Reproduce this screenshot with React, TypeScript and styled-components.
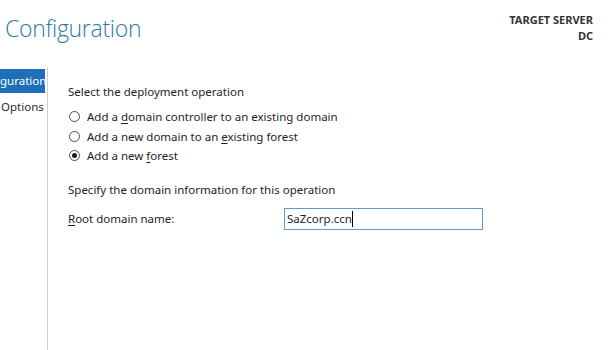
import React from 'react'
import styled, { createGlobalStyle } from 'styled-components'

const GlobalStyle = createGlobalStyle`
  html, body {
    margin: 0;
    padding: 0;
    background: #ffffff;
  }
  body {
    font-family: 'Segoe UI', 'Noto Sans', 'Open Sans', sans-serif;
    color: #1e1e1e;
  }
`

const Page = styled.div`
  width: 611px;
  height: 350px;
  display: flex;
  flex-direction: column;
  overflow: hidden;
  background: #fff;
`

const Header = styled.div`
  display: flex;
  justify-content: space-between;
  align-items: flex-start;
  height: 68px;
  flex-shrink: 0;
`

const Title = styled.h1`
  margin: 12px 0 0 5px;
  font-family: 'Open Sans', 'Lato', sans-serif;
  font-weight: 300;
  font-size: 23px;
  letter-spacing: -0.3px;
  line-height: 32px;
  color: #2a7bab;
`

const Target = styled.div`
  margin: 12px 18px 0 0;
  text-align: right;
  font-size: 11px;
  font-weight: 700;
  line-height: 16px;
  color: #333;
`

const Body = styled.div`
  flex: 1;
  display: flex;
`

const Nav = styled.div`
  width: 47px;
  padding-top: 1px;
  border-right: 1px solid #cfcfcf;
  display: flex;
  flex-direction: column;
  overflow: hidden;
`

const NavItem = styled.div<{ $active?: boolean }>`
  height: 24px;
  line-height: 24px;
  padding-left: ${p => (p.$active ? 0 : 1)}px;
  width: 45px;
  box-sizing: border-box;
  font-size: 11.5px;
  white-space: nowrap;
  background: ${p => (p.$active ? '#1e6fb9' : 'transparent')};
  color: ${p => (p.$active ? '#fff' : '#2b2b2b')};
  margin-bottom: 2px;
`

const Content = styled.div`
  flex: 1;
  padding: 14px 0 0 20px;
  font-size: 11.5px;
`

const Caption = styled.div`
  height: 20px;
  line-height: 20px;
  margin-bottom: 5px;
`

const Radios = styled.div`
  display: flex;
  flex-direction: column;
  margin-bottom: 14px;
`

const RadioRow = styled.label`
  display: flex;
  align-items: center;
  height: 19.5px;
  gap: 7px;
  padding-left: 1px;
`

const Dot = styled.span<{ $on?: boolean }>`
  width: 11px;
  height: 11px;
  border-radius: 50%;
  border: 1px solid #4d4d4d;
  box-sizing: border-box;
  display: flex;
  align-items: center;
  justify-content: center;
  background: #fff;
  &::after {
    content: '';
    width: 5px;
    height: 5px;
    border-radius: 50%;
    background: ${p => (p.$on ? '#1a1a1a' : 'transparent')};
  }
`

const Key = styled.span`
  text-decoration: underline;
  text-underline-offset: 2px;
`

const FieldRow = styled.div`
  display: flex;
  align-items: center;
  margin-top: 8px;
`

const FieldLabel = styled.div`
  width: 216px;
`

const Input = styled.div`
  width: 199px;
  height: 22px;
  box-sizing: border-box;
  border: 1px solid #5b9bd0;
  padding: 0 2px;
  display: flex;
  align-items: center;
  font-size: 11.5px;
`

const Caret = styled.span`
  display: inline-block;
  width: 1px;
  height: 16px;
  background: #000;
`

export default function App() {
  return (
    <Page>
      <GlobalStyle />
      <Header>
        <Title>Configuration</Title>
        <Target>
          TARGET SERVER
          <br />
          DC
        </Target>
      </Header>
      <Body>
        <Nav>
          <NavItem $active>guration</NavItem>
          <NavItem>Options</NavItem>
        </Nav>
        <Content>
          <Caption>Select the deployment operation</Caption>
          <Radios>
            <RadioRow>
              <Dot />
              <span>
                Add a <Key>d</Key>omain controller to an existing domain
              </span>
            </RadioRow>
            <RadioRow>
              <Dot />
              <span>
                Add a new domain to an <Key>e</Key>xisting forest
              </span>
            </RadioRow>
            <RadioRow>
              <Dot $on />
              <span>
                Add a new <Key>f</Key>orest
              </span>
            </RadioRow>
          </Radios>
          <Caption>Specify the domain information for this operation</Caption>
          <FieldRow>
            <FieldLabel>
              <Key>R</Key>oot domain name:
            </FieldLabel>
            <Input>
              SaZcorp.ccn
              <Caret />
            </Input>
          </FieldRow>
        </Content>
      </Body>
    </Page>
  )
}
